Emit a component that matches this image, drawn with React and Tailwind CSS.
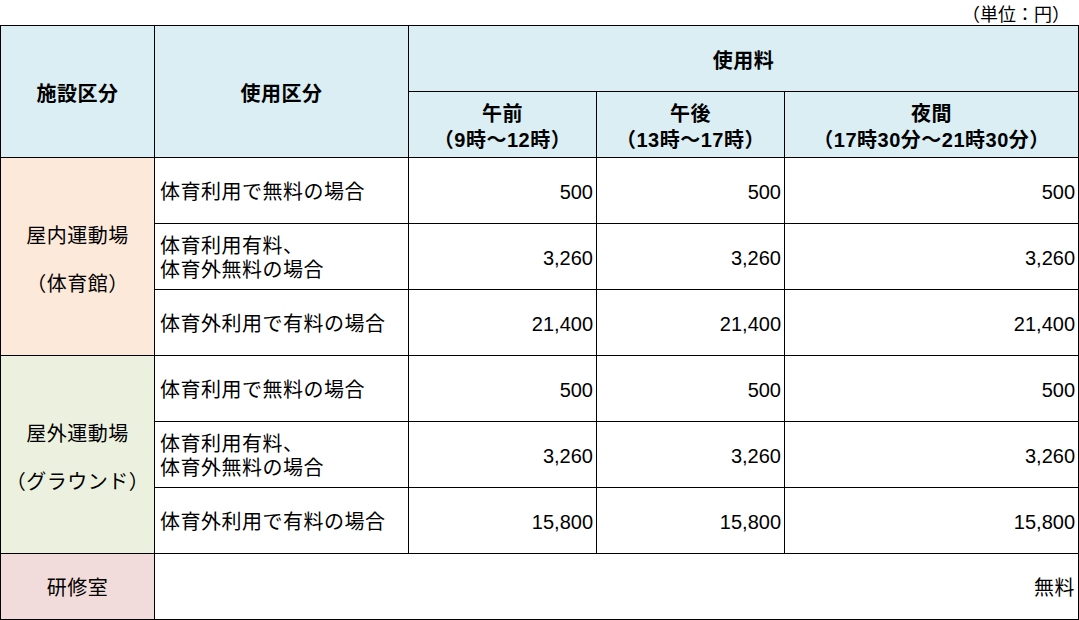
import React from "react";

const font = { fontFamily: '"Liberation Sans", "Noto Sans CJK JP", sans-serif' };

const rows = [
  {
    facility: ["屋内運動場", "（体育館）"],
    bg: "bg-[#fde9d9]",
    items: [
      { label: ["体育利用で無料の場合"], v: ["500", "500", "500"] },
      { label: ["体育利用有料、", "体育外無料の場合"], v: ["3,260", "3,260", "3,260"] },
      { label: ["体育外利用で有料の場合"], v: ["21,400", "21,400", "21,400"] },
    ],
  },
  {
    facility: ["屋外運動場", "（グラウンド）"],
    bg: "bg-[#ebf1de]",
    items: [
      { label: ["体育利用で無料の場合"], v: ["500", "500", "500"] },
      { label: ["体育利用有料、", "体育外無料の場合"], v: ["3,260", "3,260", "3,260"] },
      { label: ["体育外利用で有料の場合"], v: ["15,800", "15,800", "15,800"] },
    ],
  },
];

export default function App() {
  return (
    <div className="w-[1079px] h-[620px] bg-white text-black overflow-hidden" style={font}>
      <div className="h-[25px] pt-[5px] flex items-center justify-end pr-[9px] text-[18px] leading-none">
        （単位：円）
      </div>
      <table className="table-fixed border-collapse w-[1078px] text-[20px] tracking-[0.5px]">
        <colgroup>
          <col className="w-[154px]" />
          <col className="w-[254px]" />
          <col className="w-[188px]" />
          <col className="w-[188px]" />
          <col className="w-[294px]" />
        </colgroup>
        <thead>
          <tr className="h-[66px] bg-[#daeef3] font-bold">
            <th rowSpan={2} className="border border-black font-bold text-center pt-[4px]">施設区分</th>
            <th rowSpan={2} className="border border-black font-bold text-center pt-[4px]">使用区分</th>
            <th colSpan={3} className="border border-black font-bold text-center pt-[4px]">使用料</th>
          </tr>
          <tr className="h-[66px] bg-[#daeef3]">
            <th className="border border-black font-bold text-center leading-[26px] pt-[4px]">
              午前<br />（9時～12時）
            </th>
            <th className="border border-black font-bold text-center leading-[26px] pt-[4px]">
              午後<br />（13時～17時）
            </th>
            <th className="border border-black font-bold text-center leading-[26px] pt-[4px]">
              夜間<br />（17時30分～21時30分）
            </th>
          </tr>
        </thead>
        <tbody>
          {rows.map((g, gi) =>
            g.items.map((it, i) => (
              <tr key={gi + "-" + i} className="h-[66px]">
                {i === 0 && (
                  <td rowSpan={3} className={"border border-black text-center align-middle pt-[7px] " + g.bg}>
                    <div className="flex flex-col items-center gap-[24px] leading-[24px]">
                      <span>{g.facility[0]}</span>
                      <span>{g.facility[1]}</span>
                    </div>
                  </td>
                )}
                <td className="border border-black pl-[5px] pt-[3px] leading-[24px] align-middle">
                  {it.label.map((l, k) => (
                    <div key={k}>{l}</div>
                  ))}
                </td>
                {it.v.map((v, k) => (
                  <td key={k} className="border border-black text-right pr-[3px] pt-[3px] align-middle tracking-normal">
                    {v}
                  </td>
                ))}
              </tr>
            ))
          )}
          <tr className="h-[66px]">
            <td className="border border-black bg-[#f2dcdb] text-center pt-[3px]">研修室</td>
            <td colSpan={4} className="border border-black text-right pr-[3px] pt-[3px]">無料</td>
          </tr>
        </tbody>
      </table>
    </div>
  );
}
